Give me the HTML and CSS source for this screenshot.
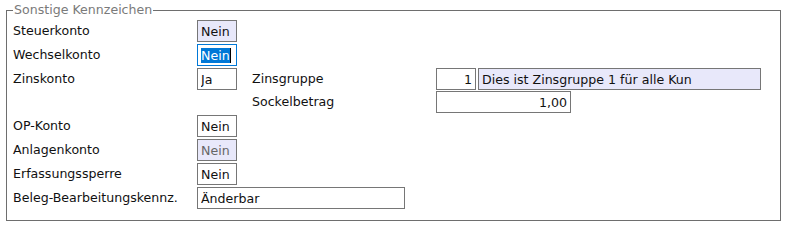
FILE: index.html
```html
<!DOCTYPE html>
<html>
    <head>
        <meta charset="UTF-8">
        <title>Sonstige Kennzeichen</title>
        <link rel="stylesheet" href="styles.css">
    </head>
    <body>
        <fieldset class="box">
            <legend>Sonstige Kennzeichen</legend>
            <div class="grid">
                <label class="lbl">Steuerkonto</label>
                <input class="fld short ro" value="Nein" readonly>

                <label class="lbl">Wechselkonto</label>
                <div class="fld short focus"><span class="sel">Nein</span><span class="caret"></span></div>

                <label class="lbl">Zinskonto</label>
                <input class="fld short" value="Ja">
                <label class="lbl lbl2">Zinsgruppe</label>
                <div class="pair">
                    <input class="fld short num" value="1">
                    <input class="fld desc ro" value="Dies ist Zinsgruppe 1 für alle Kun" readonly>
                </div>

                <label class="lbl lbl2 up">Sockelbetrag</label>
                <input class="fld mid num up" value="1,00">

                <label class="lbl">OP-Konto</label>
                <input class="fld short" value="Nein">

                <label class="lbl">Anlagenkonto</label>
                <input class="fld short ro grey" value="Nein" readonly>

                <label class="lbl">Erfassungssperre</label>
                <input class="fld short" value="Nein">

                <label class="lbl">Beleg-Bearbeitungskennz.</label>
                <input class="fld wide" value="Änderbar">
            </div>
        </fieldset>
    </body>
</html>
```

FILE: styles.css
```css
*{
    margin:0;
    padding:0;
    box-sizing:border-box;
}
body{
    font-family:"DejaVu Sans", Verdana, sans-serif;
    font-size:12.6px;
    color:#111;
    background:#fff;
    padding:3px 6px 0 6px;
}
.box{
    border:1px solid #6e6e6e;
    padding:3px 6px 12px 6px;
    height:218px;
}
.box legend{
    color:#7a7a7a;
    padding:0 1px;
    line-height:14px;
}
.grid{
    display:grid;
    grid-template-columns:184px 55px 184px auto;
    row-gap:2px;
    align-items:center;
}
.lbl{
    grid-column:1;
    height:22px;
    line-height:22px;
    white-space:nowrap;
}
.lbl2{
    grid-column:3;
}
.up{
    margin-top:-1px;
}
.fld{
    display:block;
    height:22px;
    border:1px solid #767676;
    background:#fff;
    font:inherit;
    color:#111;
    padding:0 3px;
    outline:none;
}
.short{
    width:40px;
}
.mid{
    width:135px;
}
.wide{
    width:208px;
    grid-column:2 / span 2;
}
.desc{
    width:283px;
}
.num{
    text-align:right;
}
.ro{
    background:#e8e8fa;
}
.grey{
    color:#666;
}
.pair{
    display:flex;
    gap:2px;
}
.focus{
    border-color:#0078d7;
    display:flex;
    align-items:center;
    padding-left:3px;
}
.sel{
    background:#0078d7;
    color:#fff;
    line-height:15px;
}
.caret{
    width:1px;
    height:15px;
    background:#000;
}
```
